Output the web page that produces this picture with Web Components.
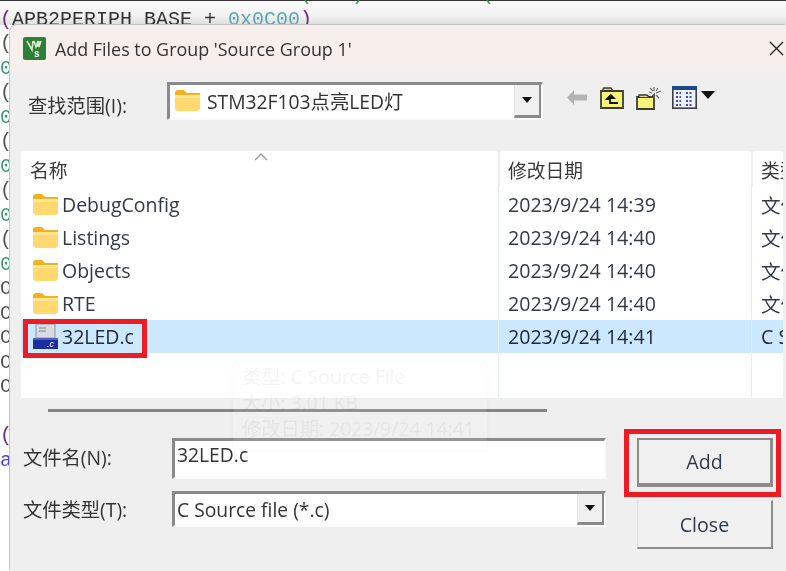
<!DOCTYPE html>
<html>
<head>
<meta charset="utf-8">
<title>Add Files to Group</title>
<style>
  html, body { margin: 0; height: 100%; overflow: hidden; background: #fff; }
  body { font-family: "Open Sans", "Noto Sans CJK SC", sans-serif; color: #333; filter: blur(0.5px); }
</style>
</head>
<body>
<code-backdrop></code-backdrop>
<file-dialog title-text="Add Files to Group 'Source Group 1'"></file-dialog>

<script>
const folderSvg = `<svg width="25" height="21" viewBox="0 0 25 21">
  <path d="M0 3 Q0 0 3 0H9L12 3H25V6H0Z" fill="#f2b11f"/>
  <path d="M0 5H22 Q25 5 25 8V18 Q25 21 22 21H3 Q0 21 0 18Z" fill="#ffd96f"/>
  <path d="M0 5H25V8H0Z" fill="#ffe694"/>
</svg>`;

class CodeBackdrop extends HTMLElement {
  constructor() {
    super();
    this.attachShadow({mode: 'open'});
    const left = ['(A','0-','(A','0-','(A','0-','(A','0-','(A','0-','OI','OI','OI','OI','OI','','(','a'];
    const rows = left.map(t => {
      let color = t === '0-' ? '#3d9a78' : '#555';
      if (t === 'a') color = '#5a3fd0';
      if (t === '(') color = '#6a2a80';
      return `<div class="line" style="color:${color}">${t}</div>`;
    }).join('');
    this.shadowRoot.innerHTML = `
      <style>
        :host { display: block; position: absolute; inset: 0; overflow: hidden; background: #fff; }
        .top { height: 1px; background: #333; }
        .band { position: absolute; left: 0; right: 0; top: 1px; height: 24px;
                background: linear-gradient(#fbfbfb, #f2f2f2 60%, #dcdcdc); }
        .code { position: relative; margin-top: -18px; font: 20px/24.5px "Liberation Mono", monospace; }
        .line { height: 24.5px; white-space: pre; }
        .hex { color: #5aa6ae; }
        .par { color: #6a2a80; }
        .frag { color: #2f9a4a; margin-left: 235px; letter-spacing: 1px; }
      </style>
      <div class="top"></div>
      <div class="band"></div>
      <div class="code">
        <div class="line frag">/* 0 ( 0 ) 0 0 0 0 ( 0 0 0 0 0 */</div>
        <div class="line"><span class="par">(</span>APB2PERIPH BASE + <span class="hex">0x0C00</span><span class="par">)</span></div>
        ${rows}
      </div>`;
  }
}
customElements.define('code-backdrop', CodeBackdrop);

class SunkenBox extends HTMLElement {
  constructor() {
    super();
    this.attachShadow({mode: 'open'});
    this.shadowRoot.innerHTML = `
      <style>
        :host { display: flex; box-sizing: border-box; background: #fff; align-items: stretch;
                border-top: 3px solid #8a8a8a; border-left: 3px solid #8a8a8a;
                border-right: 2px solid #fafafa; border-bottom: 2px solid #fafafa; }
        .content { flex: 1; display: flex; gap: 7px; padding: var(--pad, 0 0 0 2px); min-width: 0; font-size: 19.3px; line-height: 28px; color: #333; align-items: var(--align, center); white-space: nowrap; }
        .drop { display: none; width: 24px; background: #f0f0f0; border-left: 1px solid #e4e4e4;
                border-right: 2px solid #8a8a8a; border-bottom: 3px solid #8a8a8a; box-sizing: content-box;
                align-items: center; justify-content: center; }
        :host([dropdown]) .drop { display: flex; }
        .tri { width: 0; height: 0; border-left: 5.5px solid transparent; border-right: 5.5px solid transparent; border-top: 6px solid #111; }
      </style>
      <div class="content"><slot></slot></div>
      <div class="drop"><div class="tri"></div></div>`;
  }
}
customElements.define('sunken-box', SunkenBox);

class WinButton extends HTMLElement {
  constructor() {
    super();
    this.attachShadow({mode: 'open'});
    this.shadowRoot.innerHTML = `
      <style>
        :host { display: flex; box-sizing: border-box; width: 136px; height: 49px; align-items: center; justify-content: center;
                background: #f0f0f0; font-size: 19.6px; color: #2f3a48;
                border-top: 1px solid #e8e8e8; border-left: 1px solid #e0e0e0;
                border-right: 2px solid #8c8c8c; border-bottom: 2px solid #8c8c8c; }
        :host([default]) { border: 2px solid #8c8c8c; border-right-width: 3px; border-bottom-width: 4px; }
      </style>
      <slot></slot>`;
  }
}
customElements.define('win-button', WinButton);

class FileRow extends HTMLElement {
  constructor() {
    super();
    this.attachShadow({mode: 'open'});
    const isFile = this.hasAttribute('source');
    const icon = isFile ? `<svg width="25" height="25" viewBox="0 0 25 25">
        <path d="M3 0H22V14H3Z" fill="#d8dbe0" stroke="#8d96a3"/>
        <path d="M6 4H13M6 7H13" stroke="#9aa2ae" stroke-width="1.4"/>
        <path d="M0 14H25V25H0Z" fill="#1d2ca0"/>
        <path d="M0 14H25V16H0Z" fill="#4f5fc4"/>
        <text x="14" y="23" font-size="9" font-family="Liberation Sans, sans-serif" font-style="italic" fill="#fff">.c</text>
      </svg>` : folderSvg;
    this.shadowRoot.innerHTML = `
      <style>
        :host { display: grid; grid-template-columns: 477px 253px 32px; height: 33px; align-items: center; font-size: 19.6px; color: #333a46; }
        :host([selected]) { background: #cce8ff; color: #222a36; }
        .name { display: flex; align-items: center; gap: 4px; padding-left: 12px; font-size: 19.5px; }
        .icon { display: flex; width: 25px; }
        .date { padding-left: 10px; white-space: nowrap; }
        .type { padding-left: 10px; white-space: nowrap; overflow: hidden; }
      </style>
      <div class="name"><span class="icon">${icon}</span><slot></slot></div>
      <div class="date">${this.getAttribute('date')}</div>
      <div class="type">${this.getAttribute('kind')}</div>`;
  }
}
customElements.define('file-row', FileRow);

class FileList extends HTMLElement {
  constructor() {
    super();
    this.attachShadow({mode: 'open'});
    this.shadowRoot.innerHTML = `
      <style>
        :host { display: block; position: relative; box-sizing: border-box; width: 762px; height: 247px; background: #fff; overflow: hidden; }
        .head { display: grid; grid-template-columns: 477px 253px 32px; height: 38px; align-items: center; font-size: 18.8px; color: #3a3a3a; position: relative; }
        .head div { padding-left: 9px; white-space: nowrap; overflow: hidden; }
        .head div + div { padding-left: 10px; }
        .sep { position: absolute; top: 0; bottom: 0; width: 1px; background: #e6eef5; }
        .sep.a { left: 477px; } .sep.b { left: 730px; }
        .sep.h { bottom: auto; height: 36px; width: 2px; background: #efefef; }
        .sort { position: absolute; left: 233px; top: 2px; }
        .rows { position: relative; margin-top: -1px; }
        .sep { z-index: 1; }
      </style>
      <div class="sep a"></div><div class="sep b"></div>
      <div class="sep a h"></div><div class="sep b h"></div>
      <div class="head">
        <div>名称</div><div>修改日期</div><div>类型</div>
        <svg class="sort" width="14" height="8" viewBox="0 0 14 8"><path d="M1 7L7 1L13 7" fill="none" stroke="#9a9a9a" stroke-width="1.3"/></svg>
      </div>
      <div class="rows"><slot></slot></div>`;
  }
}
customElements.define('file-list', FileList);

class LookInTools extends HTMLElement {
  constructor() {
    super();
    this.attachShadow({mode: 'open'});
    this.shadowRoot.innerHTML = `
      <style>
        :host { display: flex; align-items: center; height: 38px; margin-left: 24px; }
        svg { display: block; flex: none; }
      </style>
      <svg style="margin-right:13px;margin-top:-7px" width="20" height="15" viewBox="0 0 20 15"><path d="M0 7.5L7 0V4.5H20V10.500H7V15Z" fill="#b4b4b4"/></svg>
      <svg style="margin-right:12px;margin-top:-7px" width="24" height="22" viewBox="0 0 24 22">
        <path d="M3 4V2Q3 1 4 1H11L13 4" fill="#d8d488" stroke="#3c3c30" stroke-width="1.300"/>
        <path d="M1 4H23V21H1Z" fill="#f6f27c" stroke="#3c3c30" stroke-width="1.800"/>
        <path d="M11 8L7 12H10V16H18" fill="none" stroke="#111" stroke-width="1.800"/>
        <path d="M11 7L6 12H16Z" fill="#111"/>
      </svg>
      <svg style="margin-right:10px;margin-top:-6px" width="26" height="24" viewBox="0 0 26 24">
        <path d="M1 11H16L18 9V23H1Z" fill="#f6f27c" stroke="#3c3c30" stroke-width="1.800"/>
        <path d="M3 11V9H11L13 11" fill="#d8d488" stroke="#3c3c30" stroke-width="1.300"/>
        <path d="M18 1V5M18 9V12M13 6L16 7M20 7L25 5M14 2L17 5M20 9L23 12M22 2L20 5" stroke="#6a6a6a" stroke-width="1.200"/>
      </svg>
      <svg style="margin-right:4px;margin-top:-7px" width="25" height="23" viewBox="0 0 25 23">
        <rect x="0.800" y="0.800" width="23.400" height="21.400" fill="#eef0f8" stroke="#3d3d45" stroke-width="1.600"/>
        <rect x="0" y="0" width="25" height="4" fill="#1c4a86"/>
        <path d="M4 7H9M4 11H9M4 15H9M4 19H9M14 7H20M14 11H20M14 15H20M14 19H20" stroke="#4448c0" stroke-width="2" stroke-dasharray="2 1.500"/>
      </svg>
      <svg style="margin-top:-12px" width="14" height="8" viewBox="0 0 14 8"><path d="M0 0H14L7 8Z" fill="#111"/></svg>`;
  }
}
customElements.define('look-in-tools', LookInTools);

class FileDialog extends HTMLElement {
  constructor() {
    super();
    this.attachShadow({mode: 'open'});
    this.shadowRoot.innerHTML = `
      <style>
        :host { display: flex; flex-direction: column; position: absolute; left: 10px; top: 25px; right: 0; bottom: 0;
                background: #efefef; overflow: hidden; border-top-left-radius: 8px; box-shadow: -1px -1px 0 #c4c4c4; font-size: 19.3px; color: #333; }
        .title { display: flex; align-items: center; height: 47px; flex: none; background: #f7efec; padding-left: 13px; gap: 9px; font-size: 17.9px; color: #333; }
        .title .text { flex: 1; white-space: nowrap; }
        .x { margin-right: 2px; }
        .look { display: flex; align-items: center; padding: 10px 0 0 18px; flex: none; }
        .look .lbl { width: 139px; white-space: nowrap; padding-top: 8px; }
        .look sunken-box { width: 376px; height: 38px; --pad: 0 0 0 5px; }
        .folder { display: flex; margin-top: -2px; }
        .list { margin: 31px 0 0 11px; flex: none; }
        .rule { height: 3px; width: 499px; margin: 11px 0 0 38px; background: #858585; flex: none; }
        .bottom { display: flex; padding: 26px 0 0 13px; flex: none; }
        .fields { width: 583px; display: grid; grid-template-columns: 149px 434px; grid-template-rows: 41px 36px; row-gap: 12px; align-items: center; }
        .fields .lbl { white-space: nowrap; }
        .fields .lbl.first { padding-bottom: 4px; }
        .buttons { margin-left: 31px; display: flex; flex-direction: column; gap: 13px; }
        .name-box { height: 41px; --align: flex-start; --pad: 0 0 0 2px; }
        .type-box { height: 36px; --pad: 0 0 0 2px; }
        .tip { position: absolute; left: 223px; top: 337px; width: 254px; height: 88px; box-sizing: border-box; padding: 2px 0 0 9px;
               background: rgba(255,255,255,.1); box-shadow: 0 0 3px rgba(0,0,0,.05); font-size: 19.3px; line-height: 26px; color: rgba(60,60,60,.06); white-space: nowrap; }
        .mark { position: absolute; border: 5px solid #ed1c24; box-sizing: border-box; }
        .mark.file { left: 13px; top: 294px; width: 124px; height: 39px; }
        .mark.add { left: 614px; top: 404px; width: 157px; height: 68px; }
      </style>
      <div class="title">
        <svg width="23" height="23" viewBox="0 0 23 23">
          <rect width="23" height="23" rx="2" fill="#2f7f3a"/>
          <path d="M4 4L9 13L10 4M11 4L13 10L15 4M16 4L15 10M18 4L16 10" fill="none" stroke="#d8ecc8" stroke-width="1.600"/>
          <text x="11" y="20" font-size="10" font-weight="700" font-family="Liberation Sans, sans-serif" fill="#fff">s</text>
        </svg>
        <span class="text">${this.getAttribute('title-text')}</span>
        <svg class="x" width="15" height="15" viewBox="0 0 15 15"><path d="M1 1L14 14M14 1L1 14" stroke="#222" stroke-width="1.400"/></svg>
      </div>
      <div class="look">
        <span class="lbl">查找范围(I):</span>
        <sunken-box dropdown><span class="folder">${folderSvg}</span><span>STM32F103点亮LED灯</span></sunken-box>
        <look-in-tools></look-in-tools>
      </div>
      <file-list class="list">
        <file-row date="2023/9/24 14:39" kind="文件夹">DebugConfig</file-row>
        <file-row date="2023/9/24 14:40" kind="文件夹">Listings</file-row>
        <file-row date="2023/9/24 14:40" kind="文件夹">Objects</file-row>
        <file-row date="2023/9/24 14:40" kind="文件夹">RTE</file-row>
        <file-row source selected date="2023/9/24 14:41" kind="C Source File">32LED.c</file-row>
      </file-list>
      <div class="rule"></div>
      <div class="bottom">
        <div class="fields">
          <span class="lbl first">文件名(N):</span>
          <sunken-box class="name-box">32LED.c</sunken-box>
          <span class="lbl">文件类型(T):</span>
          <sunken-box class="type-box" dropdown>C Source file (*.c)</sunken-box>
        </div>
        <div class="buttons">
          <win-button default>Add</win-button>
          <win-button>Close</win-button>
        </div>
      </div>
      <div class="tip">类型: C Source File<br>大小: 3.01 KB<br>修改日期: 2023/9/24 14:41</div>
      <div class="mark file"></div>
      <div class="mark add"></div>`;
  }
}
customElements.define('file-dialog', FileDialog);
</script>
</body>
</html>
